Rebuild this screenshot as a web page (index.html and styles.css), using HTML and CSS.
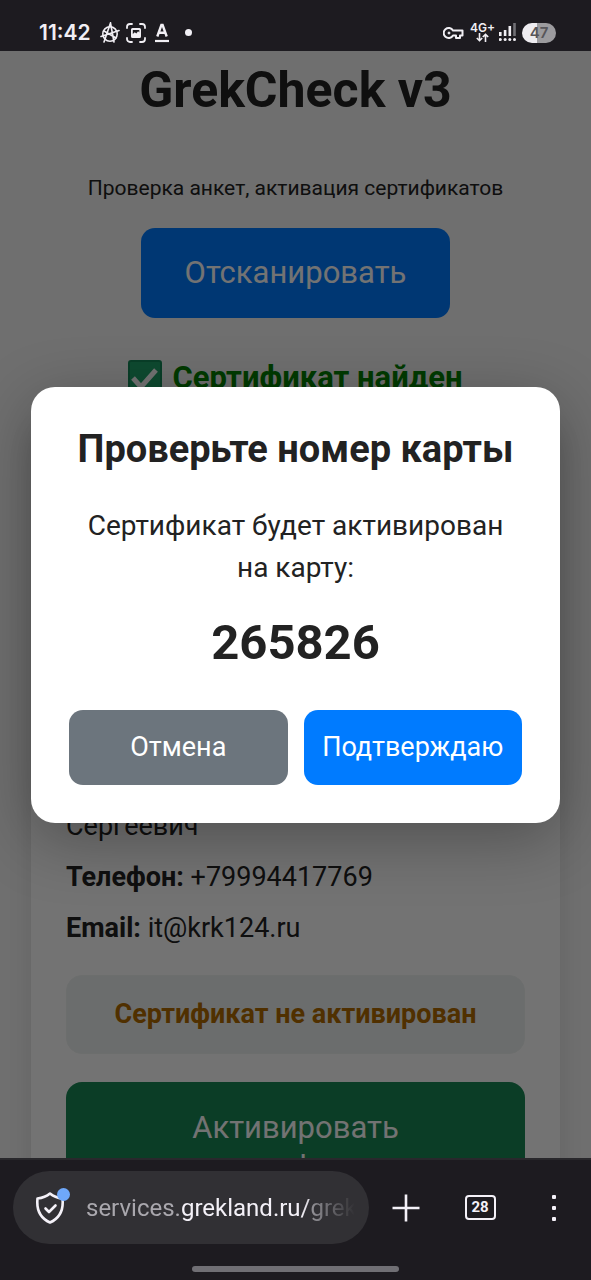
FILE: index.html
```html
<!DOCTYPE html>
<html lang="ru">
<head>
<meta charset="utf-8">
<meta name="viewport" content="width=device-width, initial-scale=1">
<title>GrekCheck v3</title>
<link rel="stylesheet" href="styles.css">
</head>
<body class="device">
<header class="status-bar">
  <div class="status-left">
    <time class="clock">11:42</time>
    <svg width="20" height="21" viewBox="0 0 20 21" fill="none" stroke="currentColor" stroke-width="1.6" stroke-linecap="round"><circle cx="10" cy="12" r="7.2"/><path d="M4 20 10.500 1l3.500 19M1 14.500 19 8.500M4 9l12 7"/></svg>
    <svg class="icon-shot" width="20" height="20" viewBox="0 0 20 20" fill="none" stroke="currentColor" stroke-width="1.8" stroke-linecap="round"><path d="M1 5V4a3 3 0 0 1 3-3h2M14 1h2a3 3 0 0 1 3 3v1M19 15v1a3 3 0 0 1-3 3h-2M6 19H4a3 3 0 0 1-3-3v-1"/><path fill="currentColor" stroke="none" fill-rule="evenodd" d="M6.500 5h7A1.500 1.500 0 0 1 15 6.500v7a1.500 1.500 0 0 1-1.500 1.500h-7A1.500 1.500 0 0 1 5 13.500v-7A1.500 1.500 0 0 1 6.500 5zM6.800 7v4l2-1.800 1.500 1.200 1.800-2.200 1.200 1.300V7z"/></svg>
    <svg class="icon-letter" width="16" height="20" viewBox="0 0 16 20" fill="none" stroke="currentColor"><path d="M3.300 13.500 7.400 2h1.200l4.100 11.500M4.800 9.800h6.400" stroke-width="2.400"/><path d="M1 18h14" stroke-width="2.200"/></svg>
    <span class="more-dot"></span>
  </div>
  <div class="status-right">
    <svg width="21" height="14" viewBox="0 0 21 14" fill="none" stroke="currentColor" stroke-width="2" stroke-linejoin="round"><path d="M10 4.500a5 5 0 1 0 0 5h3v2.500h4V9.500h2.500v-5z"/><circle cx="6" cy="7" r="1" fill="currentColor" stroke-width="1"/></svg>
    <span class="network"><span>4G+</span><svg width="13" height="9" viewBox="0 0 13 9" fill="none" stroke="currentColor" stroke-width="1.600"><path d="M3.500 0v7.500M.8 5l2.700 2.700L6.200 5M9.500 9V1.500M6.800 4l2.700-2.700L12.200 4"/></svg></span>
    <svg width="17" height="19" viewBox="0 0 17 19" fill="currentColor"><path d="M0 9h2.600v4H0zM4.800 7h2.600v6H4.800zM9.500 3h2.600v10H9.500z"/><path d="M14.200 0h2.600v13h-2.600z" opacity=".4"/><circle cx="1.300" cy="16.500" r="1.500"/><circle cx="6.100" cy="16.500" r="1.500"/><circle cx="10.800" cy="16.500" r="1.500"/><circle cx="15.500" cy="16.500" r="1.500"/></svg>
    <span class="battery">47</span>
  </div>
</header>

<div class="viewport">
  <main class="page">
    <h1 class="title">GrekCheck v3</h1>
    <p class="subtitle">Проверка анкет, активация сертификатов</p>
    <button class="scan" type="button">Отсканировать</button>
    <p class="result">
      <svg width="34" height="36" viewBox="0 0 34 36"><rect x="1" y="1" width="32" height="34" rx="2" fill="#1fa56b" stroke="#168a5a" stroke-width="2"/><path d="m5 18 8 9L28 10" fill="none" stroke="#fff" stroke-width="5"/></svg>
      <span>Сертификат найден</span>
    </p>
    <section class="card">
      <p class="owner">Сергеевич</p>
      <p class="row"><b>Телефон:</b> +79994417769</p>
      <p class="row"><b>Email:</b> it@krk124.ru</p>
      <p class="state">Сертификат не активирован</p>
      <button class="activate" type="button">Активировать сертификат</button>
    </section>
  </main>
  <div class="overlay">
    <div class="modal" role="dialog" aria-modal="true" aria-labelledby="dialog-title">
      <h2 class="modal-title" id="dialog-title">Проверьте номер карты</h2>
      <p class="modal-text">Сертификат будет активирован на карту:</p>
      <p class="card-number">265826</p>
      <div class="actions">
        <button class="action cancel" type="button">Отмена</button>
        <button class="action confirm" type="button">Подтверждаю</button>
      </div>
    </div>
  </div>
</div>

<footer class="browser">
  <nav class="toolbar">
    <button class="address" type="button">
      <span class="shield"><svg width="30" height="34" viewBox="0 0 30 34" fill="none" stroke="currentColor" stroke-width="2.600" stroke-linecap="round" stroke-linejoin="round"><path d="M15 2.500C11.500 5.500 7 7 2.500 7.500 1.500 17 4 26.500 15 31.500 26 26.500 28.500 17 27.500 7.500 23 7 18.500 5.500 15 2.500z"/><path d="m10.500 17.500 3.500 3.500 6.500-6.500"/></svg><span class="badge"></span></span>
      <span class="url">services.<span class="domain">grekland.ru/</span>grek</span>
    </button>
    <button class="tool" type="button" aria-label="Новая вкладка"><svg width="28" height="28" viewBox="0 0 28 28" stroke="currentColor" stroke-width="2.600"><path d="M14 0.500v27M0.500 14h27"/></svg></button>
    <button class="tool" type="button"><span class="tab-count">28</span></button>
    <button class="tool" type="button" aria-label="Меню"><svg width="6" height="26" viewBox="0 0 6 26" fill="currentColor"><rect x="1" width="4" height="4" rx="1"/><rect x="1" y="11" width="4" height="4" rx="1"/><rect x="1" y="22" width="4" height="4" rx="1"/></svg></button>
  </nav>
  <div class="home-bar"></div>
</footer>
</body>
</html>
```

FILE: styles.css
```css
* { box-sizing: border-box; }
h1, h2, p { margin: 0; }
button { border: 0; padding: 0; font: inherit; color: inherit; background: none; cursor: pointer; }
svg { display: block; flex: none; }

.device {
  margin: 0;
  height: 100vh;
  display: flex;
  flex-direction: column;
  overflow: hidden;
  background: #1d1b20;
  color: #222;
  font-family: Roboto, "Noto Sans", sans-serif;
}

.status-bar {
  flex: none;
  height: 51px;
  padding: 14px 35px 0 39px;
  display: flex;
  align-items: center;
  justify-content: space-between;
  color: #f1eff4;
}
.status-left, .status-right { display: flex; align-items: center; }
.clock { font: 600 21px/24px Inter, sans-serif; margin-right: 9px; }
.icon-shot { margin-left: 6px; }
.icon-letter { margin-left: 8px; }
.more-dot { width: 7px; height: 7px; margin-left: 15px; border-radius: 50%; background: currentColor; }
.network {
  margin: 0 4px 0 6px;
  display: flex;
  flex-direction: column;
  align-items: center;
  font: 600 12px/10px Inter, sans-serif;
}
.battery {
  width: 34px;
  height: 20px;
  margin-left: 6px;
  border-radius: 10px;
  background: linear-gradient(90deg, #eeecf0 45%, #9c9b9e 45%);
  color: #57565a;
  font: 600 15px/20px Inter, sans-serif;
  text-align: center;
}

.viewport { flex: 1; min-height: 0; position: relative; overflow: hidden; background: #f5f5f5; }
.page { padding: 9px 31px 0; display: flex; flex-direction: column; align-items: center; }
.title { font-size: 50px; line-height: 60px; font-weight: 700; }
.subtitle { margin-top: 53px; font-size: 21px; line-height: 30px; }
.scan {
  margin-top: 25px;
  padding: 25px 44px;
  border-radius: 14px;
  background: #007bff;
  color: #fff;
  font-size: 31px;
  line-height: 40px;
}
.result {
  margin-top: 42px;
  display: flex;
  gap: 10px;
  color: #008000;
  font-size: 31px;
  line-height: 36px;
  font-weight: 700;
}
.card {
  width: 100%;
  margin-top: 24px;
  padding: 35px;
  border-radius: 24px;
  background: #fff;
  box-shadow: 0 6px 24px rgba(0, 0, 0, 0.1);
  font-size: 27px;
  line-height: 39px;
}
.owner { min-height: 391px; display: flex; align-items: flex-end; }
.row { margin-top: 12px; }
.state {
  margin-top: 27px;
  padding: 19px;
  border: 1px solid #eff3f2;
  border-radius: 16px;
  background: #eef2f1;
  color: #b26b00;
  font-weight: 700;
  text-align: center;
}
.activate {
  width: 100%;
  margin-top: 28px;
  padding: 26px 44px;
  border-radius: 16px;
  background: #198754;
  color: #fff;
  font-size: 31px;
  line-height: 40px;
}

.overlay {
  position: absolute;
  inset: 0;
  padding: 0 31px;
  display: flex;
  align-items: center;
  background: rgba(0, 0, 0, 0.55);
}
.modal {
  flex: 1;
  padding: 38px;
  border-radius: 24px;
  background: #fff;
  box-shadow: 0 16px 64px rgba(0, 0, 0, 0.3);
  text-align: center;
}
.modal-title { font-size: 38px; line-height: 48px; font-weight: 700; white-space: nowrap; }
.modal-text { margin-top: 32px; font-size: 28px; line-height: 42px; }
.card-number { margin-top: 25px; font-size: 49px; line-height: 58px; font-weight: 700; }
.actions { margin-top: 38px; display: flex; gap: 16px; }
.action { flex: 1 1 0; padding: 18px 0; border-radius: 14px; color: #fff; font-size: 27px; line-height: 39px; }
.cancel { background: #6c757d; }
.confirm { background: #007bff; }

.browser {
  flex: none;
  padding: 11px 0 8px;
  border-top: 2px solid #29282c;
  color: #f4f1f8;
}
.toolbar { padding: 0 0 0 13px; display: flex; align-items: center; }
.address {
  flex: 1;
  min-width: 0;
  height: 73px;
  padding: 0 14px 0 22px;
  display: flex;
  align-items: center;
  gap: 21px;
  border-radius: 37px;
  background: #313034;
}
.shield { position: relative; flex: none; }
.badge { position: absolute; top: -3px; right: -5px; width: 13px; height: 13px; border-radius: 50%; background: #6fa8fa; }
.url {
  flex: 1;
  min-width: 0;
  overflow: hidden;
  white-space: nowrap;
  text-align: left;
  font-size: 24px;
  line-height: 32px;
  color: #a9a7ad;
  -webkit-mask-image: linear-gradient(90deg, #000 80%, transparent);
  mask-image: linear-gradient(90deg, #000 80%, transparent);
}
.domain { color: #f4f1f8; }
.tool { width: 74px; height: 73px; display: flex; align-items: center; justify-content: center; }
.tab-count {
  width: 31px;
  height: 25px;
  border: 2px solid currentColor;
  border-radius: 4px;
  font-size: 15px;
  line-height: 21px;
  font-weight: 700;
}
.home-bar { width: 35%; height: 6px; margin: 22px auto 0; border-radius: 3px; background: #706f74; }
```
